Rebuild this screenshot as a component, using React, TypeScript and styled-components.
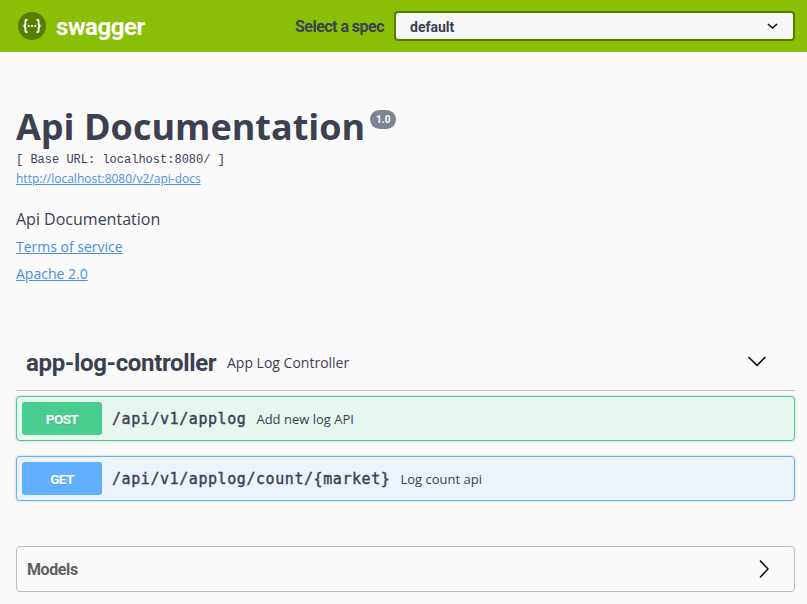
import React from 'react';
import styled, { createGlobalStyle } from 'styled-components';

const GlobalStyle = createGlobalStyle`
  *, *::before, *::after { box-sizing: border-box; }
  body {
    margin: 0;
    height: 604px;
    overflow: hidden;
    background: #fafafa;
    color: #3b4151;
    font-family: 'Open Sans', sans-serif;
  }
  h1, h2, h3, p, pre { margin: 0; }
`;

const headline = `font-family: Roboto, 'Open Sans', sans-serif; font-weight: 700;`;

const Topbar = styled.header`
  display: flex;
  align-items: center;
  height: 52px;
  padding: 0 12px 0 18px;
  background: #89bf04;
`;

const Brand = styled.div`
  display: flex;
  align-items: center;
  gap: 10px;
  flex: 1;
`;

const BrandName = styled.span`
  ${headline}
  padding-top: 2px;
  font-size: 24px;
  line-height: 30px;
  letter-spacing: -0.45px;
  color: #fff;
`;

const SpecLabel = styled.span`
  ${headline}
  width: 99px;
  font-size: 16px;
  line-height: 24px;
  letter-spacing: -0.53px;
  padding-top: 2px;
  white-space: nowrap;
`;

const SpecSelect = styled.div`
  display: flex;
  align-items: center;
  justify-content: space-between;
  width: 401px;
  height: 30px;
  padding: 2px 15px 0 14px;
  border: 2px solid #547f00;
  border-radius: 4px;
  background: #f7f7f7;
  ${headline}
  font-size: 14px;
`;

const Page = styled.main`
  padding: 0 12px 0 16px;
`;

const Info = styled.section`
  height: 284px;
  padding-top: 50px;
`;

const Title = styled.h1`
  display: flex;
  align-items: flex-start;
  gap: 5px;
  height: 49px;
  font-size: 36px;
  line-height: 49px;
  white-space: nowrap;
`;

const Version = styled.span`
  width: 26px;
  height: 19px;
  margin-top: 8px;
  border-radius: 10px;
  background: #7d8492;
  color: #fff;
  ${headline}
  font-size: 10px;
  line-height: 20px;
  text-align: center;
`;

const BaseUrl = styled.pre`
  height: 17px;
  padding-top: 1px;
  font-family: 'Liberation Mono', monospace;
  font-size: 12px;
  line-height: 17px;
`;

const Link = styled.a<{ $small?: boolean }>`
  display: block;
  width: max-content;
  font-size: ${p => (p.$small ? 12 : 14)}px;
  line-height: ${p => (p.$small ? 22 : 27)}px;
  color: #4990e2;
  text-decoration: underline;
`;

const Description = styled.p`
  margin: 17px 0 1px;
  font-size: 16px;
  line-height: 25px;
`;

const TagHeader = styled.div`
  display: flex;
  align-items: center;
  height: 55px;
  padding: 0 28px 0 10px;
  border-bottom: 1px solid #bfc0c3;
`;

const TagName = styled.h3`
  ${headline}
  width: 201px;
  font-size: 24px;
  line-height: 34px;
  letter-spacing: -0.34px;
  white-space: nowrap;
`;

const Summary = styled.span`
  flex: 1;
  font-size: 13px;
  line-height: 18px;
`;

const TagSummary = styled(Summary)`
  font-size: 14px;
`;

const Operations = styled.div`
  display: grid;
  gap: 15px;
  padding-top: 5px;
`;

const Operation = styled.div<{ $color: string; $tint: string }>`
  display: flex;
  align-items: center;
  height: 45px;
  padding: 0 5px;
  border: 1px solid ${p => p.$color};
  border-radius: 4px;
  background: ${p => p.$tint};
  box-shadow: 0 0 3px rgba(0, 0, 0, 0.19);
`;

const Method = styled.span<{ $color: string }>`
  width: 80px;
  height: 33px;
  border-radius: 3px;
  background: ${p => p.$color};
  color: #fff;
  ${headline}
  font-size: 13.5px;
  line-height: 35px;
  letter-spacing: -0.6px;
  text-align: center;
  text-shadow: 0 1px 0 rgba(0, 0, 0, 0.1);
`;

const Path = styled.span`
  padding: 0 10px;
  font-family: 'DejaVu Sans Mono', monospace;
  font-size: 15px;
  letter-spacing: 0.57px;
  line-height: 22px;
  -webkit-text-stroke: 0.4px #3b4151;
`;

const Models = styled.section`
  display: flex;
  align-items: center;
  justify-content: space-between;
  height: 46px;
  margin-top: 45px;
  padding: 0 25px 0 10px;
  border: 1px solid #bdbec4;
  border-radius: 4px;
`;

const ModelsTitle = styled.h2`
  ${headline}
  padding-top: 2px;
  font-size: 16px;
  line-height: 24px;
  letter-spacing: -0.4px;
  color: #606060;
`;

const Logo = () => (
  <svg width="28" height="28" viewBox="0 0 28 28" fill="none" stroke="#fff">
    <circle cx="14" cy="14" r="14" fill="#547f00" stroke="none" />
    <path d="M9.4 7.8H8.7Q7.4 7.8 7.4 9.3V11.8Q7.4 14 5.4 14Q7.4 14 7.4 16.2V18.7Q7.4 20.2 8.7 20.2H9.4M18.6 7.8H19.3Q20.6 7.8 20.6 9.3V11.8Q20.6 14 22.6 14Q20.6 14 20.6 16.2V18.7Q20.6 20.2 19.3 20.2H18.6" strokeWidth="1.9" />
    <g fill="#fff" stroke="none">
      <circle cx="10.8" cy="14" r="1.1" />
      <circle cx="14" cy="14" r="1.1" />
      <circle cx="17.2" cy="14" r="1.1" />
    </g>
  </svg>
);

const SelectArrow = () => (
  <svg width="11" height="8" viewBox="0 0 11 8" fill="none" stroke="#111" strokeWidth="1.6">
    <path d="M1 1L5.5 5L10 1" />
  </svg>
);

const Chevron = ({ right = false }: { right?: boolean }) => (
  <svg width={right ? 10 : 20} height={right ? 20 : 14} fill="none" stroke="#111" strokeWidth="1.6">
    <path d={right ? 'M1 1.5L9 10L1 18.5' : 'M1.5 1L10 9.3L18.5 1'} />
  </svg>
);

const operations = [
  { method: 'POST', path: '/api/v1/applog', summary: 'Add new log API', color: '#49cc90', tint: '#e8f6f0' },
  { method: 'GET', path: '/api/v1/applog/count/{market}', summary: 'Log count api', color: '#61affe', tint: '#ebf3fb' },
];

export default function App() {
  return (
    <>
      <GlobalStyle />
      <Topbar>
        <Brand>
          <Logo />
          <BrandName>swagger</BrandName>
        </Brand>
        <SpecLabel>Select a spec</SpecLabel>
        <SpecSelect>
          default
          <SelectArrow />
        </SpecSelect>
      </Topbar>
      <Page>
        <Info>
          <Title>
            Api Documentation
            <Version>1.0</Version>
          </Title>
          <BaseUrl>[ Base URL: localhost:8080/ ]</BaseUrl>
          <Link $small>http://localhost:8080/v2/api-docs</Link>
          <Description>Api Documentation</Description>
          <Link>Terms of service</Link>
          <Link>Apache 2.0</Link>
        </Info>
        <TagHeader>
          <TagName>app-log-controller</TagName>
          <TagSummary>App Log Controller</TagSummary>
          <Chevron />
        </TagHeader>
        <Operations>
          {operations.map(op => (
            <Operation key={op.path} $color={op.color} $tint={op.tint}>
              <Method $color={op.color}>{op.method}</Method>
              <Path>{op.path}</Path>
              <Summary>{op.summary}</Summary>
            </Operation>
          ))}
        </Operations>
        <Models>
          <ModelsTitle>Models</ModelsTitle>
          <Chevron right />
        </Models>
      </Page>
    </>
  );
}
